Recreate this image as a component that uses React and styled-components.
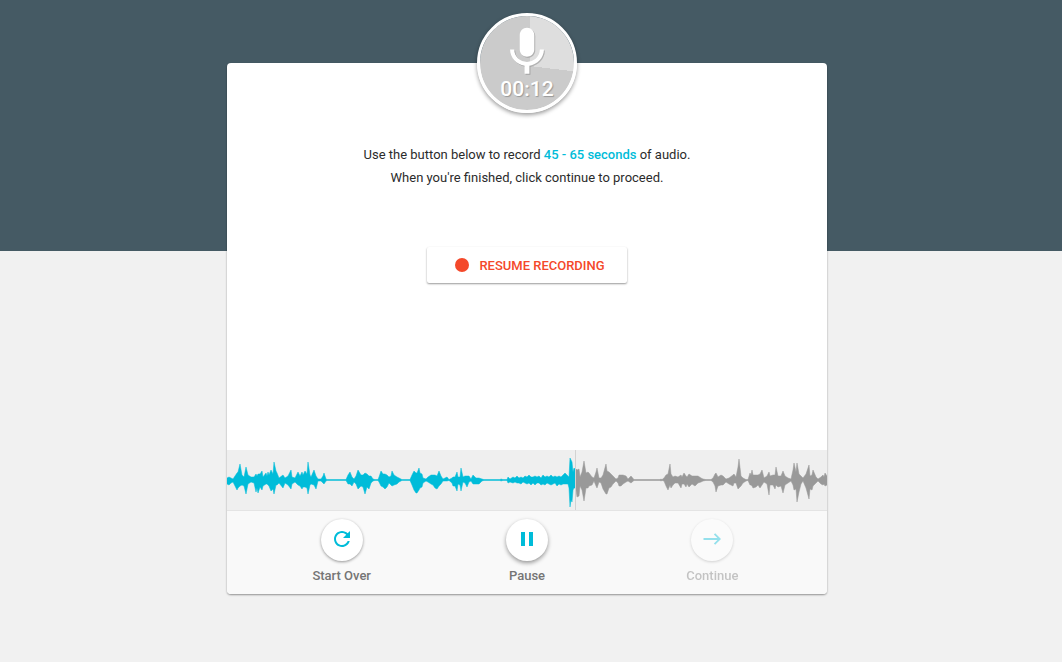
import React from "react";
import styled, { createGlobalStyle } from "styled-components";

const GlobalStyle = createGlobalStyle`
  *, *::before, *::after { box-sizing: border-box; }
  body {
    margin: 0;
    background: #f1f1f1;
    color: #2b2b2b;
    font-family: Roboto, "Liberation Sans", sans-serif;
    font-size: 13px;
  }
`;

const Page = styled.div`
  min-height: 100vh;
  padding: 63px 8px 68px 0;
  background: linear-gradient(#455a64, #455a64) top / 100% 251px no-repeat;
`;

const Card = styled.main`
  display: flex;
  flex-direction: column;
  width: 100%;
  max-width: 600px;
  margin: 0 auto;
  background: #fff;
  border-radius: 4px;
  box-shadow: 0 1px 2px rgba(0, 0, 0, 0.4);
`;

const Body = styled.section`
  display: flex;
  flex-direction: column;
  align-items: center;
  min-height: 387px;
`;

const Timer = styled.div`
  display: flex;
  flex-direction: column;
  align-items: center;
  width: 100px;
  height: 100px;
  margin-top: -50px;
  padding-top: 7px;
  border: 3px solid #fff;
  border-radius: 50%;
  background: conic-gradient(at 50px 50px, #dedede 97deg, #cbcbcb 97deg) padding-box;
  box-shadow: 0 2px 4px rgba(0, 0, 0, 0.4);
  color: #fff;

  svg {
    width: 58px;
    height: 58px;
    flex: none;
    margin-bottom: -4px;
    fill: currentColor;
    filter: drop-shadow(1px 1px 0 rgba(0, 0, 0, 0.2));
  }
`;

const Elapsed = styled.time`
  font-size: 21px;
  font-weight: 500;
  line-height: 24px;
  text-shadow: 1px 1px 1px rgba(0, 0, 0, 0.25);
`;

const Instructions = styled.p`
  margin: 30px 0 0;
  line-height: 23px;
  text-align: center;

  strong {
    color: #00bcd9;
    font-weight: 500;
  }
`;

const RecordButton = styled.button`
  display: flex;
  align-items: center;
  justify-content: center;
  gap: 10px;
  width: 200px;
  height: 36px;
  margin-top: 58px;
  padding: 0 0 0 6px;
  border: 0;
  border-radius: 2px;
  background: #fff;
  box-shadow: 0 1px 2px rgba(0, 0, 0, 0.4);
  color: #f4482a;
  font: 500 13px Roboto, "Liberation Sans", sans-serif;
  text-transform: uppercase;
  cursor: pointer;
`;

const Dot = styled.span`
  width: 14px;
  height: 14px;
  border-radius: 50%;
  background: currentColor;
`;

const WaveStrip = styled.section`
  background: #efefef;
  border-bottom: 1px solid #e4e4e4;

  svg {
    display: block;
    width: 100%;
    height: 60px;
  }
`;

const Controls = styled.footer`
  display: grid;
  grid-template-columns: repeat(3, 1fr);
  padding: 8px 22px 9px;
  border-radius: 0 0 4px 4px;
  background: #f9f9f9;
`;

const Control = styled.button`
  display: flex;
  flex-direction: column;
  align-items: center;
  gap: 5px;
  padding: 0;
  border: 0;
  background: none;
  color: #757575;
  font: 500 13px/19px Roboto, "Liberation Sans", sans-serif;
  cursor: pointer;

  &:disabled {
    opacity: 0.4;
    cursor: default;
  }
`;

const Round = styled.span`
  display: grid;
  place-items: center;
  width: 42px;
  height: 42px;
  padding-bottom: 2px;
  border-radius: 50%;
  background: #fff;
  box-shadow: 0 ${(p) => (p.$raised ? "2px 4px" : "1px 3px")} rgba(0, 0, 0, 0.4);
  color: #00bcd9;

  svg {
    width: 24px;
    height: 24px;
    fill: currentColor;
  }
`;

// Each sample: x, height above the axis, depth below it.
const played = [
  [0,2,4],[2,3,5],[4,2,3],[6,1,2],[8,4,6],[10,7,10],[11,8,8],[13,16,6],[15,5,5],[17,3,6],[19,13,14],[21,5,4],
  [24,3,2],[27,3,3],[29,6,12],[30,4,8],[31,6,13],[33,6,7],[35,9,10],[36,3,6],[39,7,4],[40,4,4],[41,8,5],[42,5,6],
  [44,10,11],[46,6,9],[47,18,14],[49,9,5],[50,7,5],[52,2,3],[56,5,8],[58,2,3],[61,4,5],[64,10,9],[65,3,4],[68,2,2],
  [71,8,5],[73,4,6],[75,8,9],[76,5,7],[78,9,7],[80,6,8],[81,18,14],[83,5,5],[84,3,4],[87,10,5],[89,4,9],[91,1,1],
  [94,1,1],[96,4,3],[97,7,4],[99,1,1],[100,.4,.4],[119,.4,.4],[121,5,4],[123,8,4],[125,3,6],[127,1,2],[129,4,4],
  [131,10,9],[134,5,6],[136,5,7],[138,7,14],[140,6,7],[142,4,9],[144,4,3],[146,1,1],[148,.4,.4],[151,.4,.4],
  [152,3,2],[154,9,6],[156,6,7],[158,6,9],[160,5,7],[162,3,3],[164,4,5],[165,9,6],[167,5,5],[170,3,4],[172,2,2],
  [175,.4,.4],[183,.4,.4],[185,5,5],[187,9,10],[189,7,13],[190,7,13],[192,12,10],[193,7,8],[195,6,7],[196,2,3],
  [199,1,1],[201,3,2],[204,5,4],[206,5,5],[208,5,8],[210,4,9],[212,9,6],[214,4,4],[216,1,1],[220,3,1],[222,.4,.4],
  [225,2,3],[226,3,6],[228,3,6],[230,8,11],[231,3,4],[233,3,5],[234,12,11],[236,3,2],[238,4,3],[240,4,7],[242,4,2],
  [244,1,1],[246,5,4],[249,2,4],[252,2,4],[255,1,1],[257,.4,.4],[273,.4,.4],[274,1,1],[276,.4,.4],[280,.4,.4],
  [281,3,3],[283,1,2],[286,3,3],[288,2,2],[290,4,3],[292,2,3],[294,3,4],[296,2,2],[298,4,3],[300,3,4],[302,5,3],
  [304,3,5],[306,3,3],[308,4,5],[310,3,3],[312,4,3],[314,2,5],[316,5,4],[318,3,5],[320,4,3],[322,3,4],[324,5,5],
  [326,3,4],[328,4,3],[330,3,6],[332,4,4],[334,3,5],[336,5,4],[338,7,4],[341,4,4],[342,3,8],[343,22,27],[344,20,20],
  [345,18,22],[346,8,10],[347,12,8],[348,11,8],
];

const remaining = [
  [349,11,10],[350,10,17],[352,11,16],[353,3,6],[355,8,10],[357,19,21],[359,7,8],[361,8,8],[362,7,6],[365,3,5],
  [367,2,1],[369,8,6],[370,12,8],[372,2,2],[374,2,3],[376,5,9],[379,16,14],[380,9,14],[382,8,8],[384,6,7],[386,4,4],
  [389,1,1],[391,2,3],[392,5,6],[394,5,6],[396,5,4],[399,4,2],[401,1,1],[404,4,3],[407,.4,.4],[433,.4,.4],[434,1,1],
  [435,.4,.4],[437,2,1],[439,5,6],[441,6,10],[443,16,5],[444,6,8],[446,3,5],[448,4,3],[451,3,3],[454,5,8],[455,3,4],
  [457,7,4],[459,4,7],[460,3,4],[462,6,7],[465,4,4],[468,4,6],[471,4,3],[474,2,2],[476,1,1],[479,.4,.4],[484,.4,.4],
  [486,2,2],[488,6,6],[489,7,12],[491,3,6],[494,5,5],[496,4,5],[499,1,2],[502,2,4],[506,5,6],[507,6,3],[509,3,3],
  [511,13,9],[512,21,8],[514,4,6],[516,2,3],[519,.4,1],[521,.4,.4],[523,7,5],[524,5,5],[525,10,6],[526,5,8],
  [529,5,7],[531,5,5],[533,6,8],[535,10,5],[537,2,2],[540,4,4],[542,8,15],[543,4,5],[546,5,5],[548,5,9],[549,13,5],
  [551,4,7],[554,4,6],[556,9,13],[558,4,5],[561,2,3],[564,1,1],[566,10,5],[567,17,10],[569,8,9],[570,17,22],
  [572,6,12],[574,4,4],[576,2,1],[579,6,8],[582,15,19],[583,4,9],[585,5,10],[586,10,6],[589,3,3],[591,1,1],
  [594,3,4],[596,5,5],[597,3,4],[598,7,6],[600,4,5],
];

const AXIS = 30;

const outline = (samples) =>
  [
    ...samples.map(([x, up]) => `${x},${AXIS - up}`),
    ...[...samples].reverse().map(([x, , down]) => `${x},${AXIS + down}`),
  ].join(" ");

function Waveform() {
  return (
    <WaveStrip aria-label="Recorded audio">
      <svg viewBox="0 0 600 60" preserveAspectRatio="none" aria-hidden="true">
        <polygon points={outline(played)} fill="#00bcd9" stroke="#00bcd9" strokeWidth="0.5" />
        <polygon points={outline(remaining)} fill="#999" stroke="#999" strokeWidth="0.5" />
        <rect x="348" width="1" height="60" fill="#d2d2d2" />
      </svg>
    </WaveStrip>
  );
}

function Icon({ d }) {
  return (
    <svg viewBox="0 0 24 24" aria-hidden="true">
      <path d={d} />
    </svg>
  );
}

const icons = {
  mic: "M12 14c1.66 0 2.99-1.34 2.99-3L15 5c0-1.66-1.34-3-3-3S9 3.34 9 5v6c0 1.66 1.34 3 3 3zm5.3-3c0 3-2.54 5.1-5.3 5.1S6.7 14 6.7 11H5c0 3.41 2.72 6.23 6 6.72V21h2v-3.28c3.28-.48 6-3.3 6-6.72h-1.7z",
  restart:
    "M17.65 6.35C16.2 4.9 14.21 4 12 4c-4.42 0-7.99 3.58-7.99 8s3.57 8 7.99 8c3.73 0 6.84-2.55 7.73-6h-2.08c-.82 2.33-3.04 4-5.65 4-3.31 0-6-2.69-6-6s2.69-6 6-6c1.66 0 3.14.69 4.22 1.78L13 11h7V4l-2.35 2.35z",
  pause: "M6 19h4V5H6v14zm8-14v14h4V5h-4z",
  forward: "M3.5 11.1v1.8h13.9l-3.5 3.6 1.3 1.3L21 12l-5.8-5.8-1.3 1.3 3.5 3.6z",
};

export default function App() {
  return (
    <>
      <GlobalStyle />
      <Page>
        <Card>
          <Body>
            <Timer>
              <Icon d={icons.mic} />
              <Elapsed>00:12</Elapsed>
            </Timer>
            <Instructions>
              Use the button below to record <strong>45 - 65 seconds</strong> of audio.
              <br />
              When you're finished, click continue to proceed.
            </Instructions>
            <RecordButton type="button">
              <Dot />
              Resume Recording
            </RecordButton>
          </Body>
          <Waveform />
          <Controls>
            <Control type="button">
              <Round>
                <Icon d={icons.restart} />
              </Round>
              Start Over
            </Control>
            <Control type="button">
              <Round $raised>
                <Icon d={icons.pause} />
              </Round>
              Pause
            </Control>
            <Control type="button" disabled>
              <Round>
                <Icon d={icons.forward} />
              </Round>
              Continue
            </Control>
          </Controls>
        </Card>
      </Page>
    </>
  );
}
